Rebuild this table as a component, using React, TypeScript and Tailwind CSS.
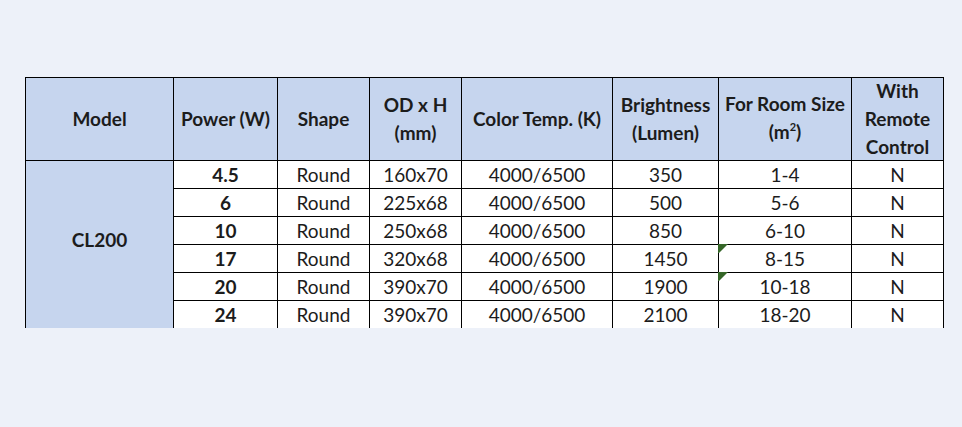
import React from "react";

const rows = [
  { p: "4.5", od: "160x70", b: "350", r: "1-4", tri: false },
  { p: "6", od: "225x68", b: "500", r: "5-6", tri: false },
  { p: "10", od: "250x68", b: "850", r: "6-10", tri: false },
  { p: "17", od: "320x68", b: "1450", r: "8-15", tri: true },
  { p: "20", od: "390x70", b: "1900", r: "10-18", tri: true },
  { p: "24", od: "390x70", b: "2100", r: "18-20", tri: false },
];

const hdr = "bg-[#c6d5ee] flex flex-col items-center justify-center text-center font-bold leading-[28px]";
const cell = "bg-white flex items-center justify-center leading-none";

function Tri() {
  return (
    <svg className="absolute left-[-1px] top-[-1px]" width="10" height="10" viewBox="0 0 10 10">
      <polygon points="0,0 10,0 1,9 0,9" fill="#356628" />
    </svg>
  );
}

export default function App() {
  return (
    <div
      className="w-[962px] h-[427px] bg-[#edf1f9] pt-[77px] pl-[25px] text-[19px] text-[#1c1c1c]"
      style={{ fontFamily: "Lato, 'Liberation Sans', sans-serif" }}
    >
      <div className="inline-grid bg-black gap-px p-px pb-0 grid-cols-[147px_103px_91px_91px_150px_105px_132px_91px] grid-rows-[82px_27px_27px_27px_27px_27px_27px]">
        <div className={hdr}>Model</div>
        <div className={hdr}>Power (W)</div>
        <div className={hdr}>Shape</div>
        <div className={hdr}>
          <span>OD x H</span>
          <span>(mm)</span>
        </div>
        <div className={hdr}>Color Temp. (K)</div>
        <div className={hdr}>
          <span>Brightness</span>
          <span>(Lumen)</span>
        </div>
        <div className={hdr}>
          <span>For Room Size</span>
          <span>
            (m<span className="text-[11px] relative top-[-8px]">2</span>)
          </span>
        </div>
        <div className={hdr}>
          <span>With</span>
          <span>Remote</span>
          <span>Control</span>
        </div>
        <div className="bg-[#c6d5ee] row-start-2 row-span-6 col-start-1 flex items-center justify-center font-bold pb-[8px]">
          CL200
        </div>
        {rows.map((r, i) => (
          <React.Fragment key={i}>
            <div className={cell + " font-bold col-start-2"}>{r.p}</div>
            <div className={cell}>Round</div>
            <div className={cell}>{r.od}</div>
            <div className={cell}>4000/6500</div>
            <div className={cell}>{r.b}</div>
            <div className={cell + " relative"}>
              {r.tri && <Tri />}
              {r.r}
            </div>
            <div className={cell}>N</div>
          </React.Fragment>
        ))}
      </div>
    </div>
  );
}
